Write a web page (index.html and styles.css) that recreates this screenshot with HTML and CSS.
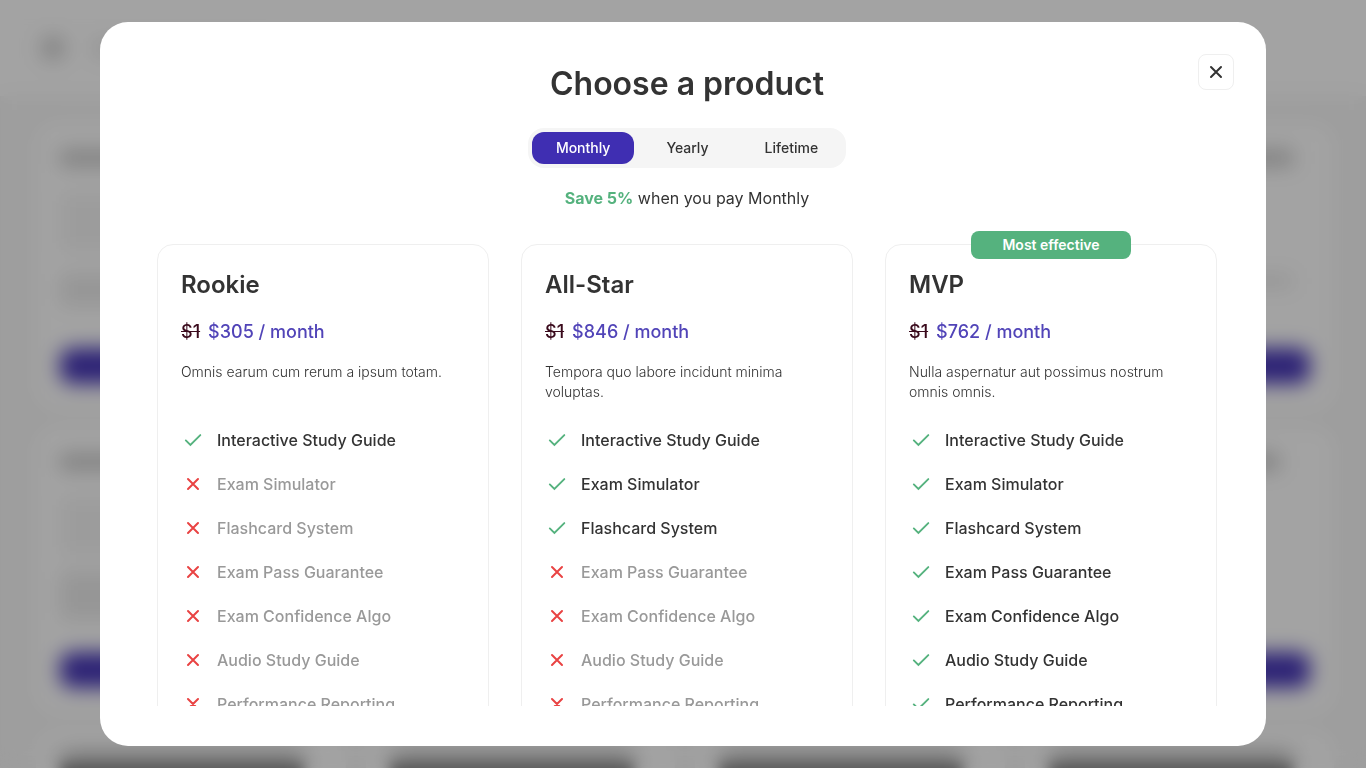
FILE: index.html
```
<!DOCTYPE html>
<html lang="en">
<head>
<meta charset="utf-8">
<title>Choose a product</title>
<link rel="stylesheet" href="styles.css">
</head>
<body>
<svg class="sprite" aria-hidden="true">
  <symbol id="check" viewBox="0 0 24 24"><path d="M4.8 12.4l4.6 4.5L19.3 7.1" fill="none" stroke="currentColor" stroke-width="1.9" stroke-linecap="round"/></symbol>
  <symbol id="cross" viewBox="0 0 24 24"><path d="M7 7l10 10M17 7L7 17" fill="none" stroke="currentColor" stroke-width="2" stroke-linecap="round"/></symbol>
</svg>

<div class="page" aria-hidden="true">
  <div class="topbar"><span class="logo"></span><span class="logo-text"></span></div>
  <div class="tiles">
    <div class="tile"><i class="bar title"></i><i class="bar para"></i><i class="bar note"></i><i class="cta"></i></div>
    <div class="tile"><i class="bar title"></i><i class="bar para"></i><i class="bar note"></i><i class="cta"></i></div>
    <div class="tile"><i class="bar title"></i><i class="bar para"></i><i class="bar note"></i><i class="cta"></i></div>
    <div class="tile"><i class="bar title wide"></i><i class="bar para clear"></i><i class="bar note thin"></i><i class="cta"></i></div>
    <div class="tile"><i class="bar title"></i><i class="bar para"></i><i class="bar note tall"></i><i class="cta"></i></div>
    <div class="tile"><i class="bar title"></i><i class="bar para"></i><i class="bar note"></i><i class="cta"></i></div>
    <div class="tile"><i class="bar title"></i><i class="bar para"></i><i class="bar note"></i><i class="cta"></i></div>
    <div class="tile"><i class="bar title"></i><i class="bar para clear"></i><i class="bar note clear"></i><i class="cta"></i></div>
    <div class="tile"><i class="bar heading"></i></div>
    <div class="tile"><i class="bar heading"></i></div>
    <div class="tile"><i class="bar heading"></i></div>
    <div class="tile"><i class="bar heading"></i></div>
  </div>
</div>

<div class="overlay">
  <main class="modal" role="dialog" aria-modal="true" aria-labelledby="modal-title">
    <button class="close" type="button" aria-label="Close"><svg class="icon"><use href="#cross"/></svg></button>
    <div class="scroll">
      <h1 class="modal-title" id="modal-title">Choose a product</h1>
      <div class="tabs">
        <button class="tab active" type="button">Monthly</button>
        <button class="tab" type="button">Yearly</button>
        <button class="tab" type="button">Lifetime</button>
      </div>
      <p class="saving"><strong>Save 5%</strong> when you pay Monthly</p>
      <div class="plans">
        <section class="plan">
          <h2 class="plan-name">Rookie</h2>
          <p class="price"><s>$1</s><span>$305 / month</span></p>
          <p class="summary">Omnis earum cum rerum a ipsum totam.</p>
          <ul class="features">
            <li><svg class="icon"><use href="#check"/></svg>Interactive Study Guide</li>
            <li class="off"><svg class="icon"><use href="#cross"/></svg>Exam Simulator</li>
            <li class="off"><svg class="icon"><use href="#cross"/></svg>Flashcard System</li>
            <li class="off"><svg class="icon"><use href="#cross"/></svg>Exam Pass Guarantee</li>
            <li class="off"><svg class="icon"><use href="#cross"/></svg>Exam Confidence Algo</li>
            <li class="off"><svg class="icon"><use href="#cross"/></svg>Audio Study Guide</li>
            <li class="off"><svg class="icon"><use href="#cross"/></svg>Performance Reporting</li>
          </ul>
        </section>
        <section class="plan">
          <h2 class="plan-name">All-Star</h2>
          <p class="price"><s>$1</s><span>$846 / month</span></p>
          <p class="summary">Tempora quo labore incidunt minima voluptas.</p>
          <ul class="features">
            <li><svg class="icon"><use href="#check"/></svg>Interactive Study Guide</li>
            <li><svg class="icon"><use href="#check"/></svg>Exam Simulator</li>
            <li><svg class="icon"><use href="#check"/></svg>Flashcard System</li>
            <li class="off"><svg class="icon"><use href="#cross"/></svg>Exam Pass Guarantee</li>
            <li class="off"><svg class="icon"><use href="#cross"/></svg>Exam Confidence Algo</li>
            <li class="off"><svg class="icon"><use href="#cross"/></svg>Audio Study Guide</li>
            <li class="off"><svg class="icon"><use href="#cross"/></svg>Performance Reporting</li>
          </ul>
        </section>
        <section class="plan">
          <span class="ribbon">Most effective</span>
          <h2 class="plan-name">MVP</h2>
          <p class="price"><s>$1</s><span>$762 / month</span></p>
          <p class="summary">Nulla aspernatur aut possimus nostrum omnis omnis.</p>
          <ul class="features">
            <li><svg class="icon"><use href="#check"/></svg>Interactive Study Guide</li>
            <li><svg class="icon"><use href="#check"/></svg>Exam Simulator</li>
            <li><svg class="icon"><use href="#check"/></svg>Flashcard System</li>
            <li><svg class="icon"><use href="#check"/></svg>Exam Pass Guarantee</li>
            <li><svg class="icon"><use href="#check"/></svg>Exam Confidence Algo</li>
            <li><svg class="icon"><use href="#check"/></svg>Audio Study Guide</li>
            <li><svg class="icon"><use href="#check"/></svg>Performance Reporting</li>
          </ul>
        </section>
      </div>
    </div>
  </main>
</div>
</body>
</html>
```
FILE: styles.css
```
* { box-sizing: border-box; }
body {
  margin: 0;
  height: 100vh;
  overflow: hidden;
  background: #f7f7f7;
  color: #333;
  font-family: Inter, "Liberation Sans", sans-serif;
  font-size: 16px;
  line-height: 24px;
}
h1, h2, p, ul { margin: 0; padding: 0; }
button { font: inherit; color: inherit; border: 0; background: none; padding: 0; cursor: pointer; }
.sprite { display: none; }
.icon { width: 24px; height: 24px; flex: none; }

/* Page behind the dialog */
.page { height: 100vh; overflow: hidden; }
.topbar {
  display: flex;
  align-items: center;
  gap: 28px;
  height: 96px;
  padding: 0 42px;
  background: #fff;
}
.logo { width: 22px; height: 22px; border-radius: 6px; background: #ccc; }
.logo-text { width: 160px; height: 20px; background: #ececec; }
.tiles {
  display: grid;
  grid-template-columns: repeat(4, 1fr);
  grid-auto-rows: 284px;
  gap: 20px;
  padding: 28px 32px 28px 36px;
}
.tile {
  display: flex;
  flex-direction: column;
  padding: 24px;
  border-radius: 20px;
  background: #fff;
}
.bar { display: block; background: #f5f5f5; }
.title { width: 230px; height: 16px; margin: 2px 0 26px; background: #c8c8c8; }
.title.wide { width: 244px; }
.para { height: 60px; margin-bottom: 22px; }
.note { height: 32px; background: #ebebeb; }
.note.tall { height: 48px; margin-top: -6px; background: #ebebeb; }
.note.thin { width: 244px; height: 14px; }
.bar.clear { background: none; }
.cta { display: block; height: 36px; margin-top: auto; border-radius: 12px; background: #4737b8; }
.heading { width: 244px; height: 40px; background: #888; filter: blur(6px); }

/* Dialog */
.overlay {
  position: fixed;
  inset: 0;
  display: flex;
  padding: 22px 100px;
  background: rgba(0, 0, 0, 0.36);
  backdrop-filter: blur(10px);
}
.modal {
  position: relative;
  flex: 1;
  display: flex;
  padding: 0 49px 40px 57px;
  border-radius: 28px;
  background: #fff;
}
.close {
  position: absolute;
  top: 32px;
  right: 32px;
  display: flex;
  align-items: center;
  justify-content: center;
  width: 36px;
  height: 36px;
  border: 1px solid #efefef;
  border-radius: 8px;
}
.scroll {
  flex: 1;
  display: flex;
  flex-direction: column;
  align-items: center;
  padding-top: 42px;
  overflow-y: auto;
  scrollbar-width: none;
}
.modal-title { margin-bottom: 24px; font-size: 32px; line-height: 40px; font-weight: 600; }
.tabs { display: flex; gap: 8px; padding: 4px; border-radius: 16px; background: #f5f5f5; }
.tab { padding: 0 24px; border-radius: 12px; font-size: 14px; line-height: 32px; font-weight: 500; }
.tab.active { background: #3f2eb2; color: #fff; }
.saving { margin: 18px 0 34px; }
.saving strong { color: #55b27e; font-weight: 700; }
.plans {
  display: grid;
  grid-template-columns: repeat(3, 1fr);
  gap: 32px;
  width: 100%;
}
.plan {
  position: relative;
  padding: 23px;
  border: 1px solid #efefef;
  border-radius: 16px;
}
.ribbon {
  position: absolute;
  top: -14px;
  left: 50%;
  width: 160px;
  transform: translateX(-50%);
  border-radius: 8px;
  background: #55b27e;
  color: #fff;
  font-size: 14px;
  line-height: 28px;
  font-weight: 600;
  text-align: center;
}
.plan-name { font-size: 24px; line-height: 34px; font-weight: 600; }
.price { display: flex; gap: 8px; margin: 15px 0; font-size: 18px; line-height: 30px; font-weight: 500; color: #5144b8; }
.price s { color: #3a0a1c; }
.summary { min-height: 40px; margin-bottom: 26px; font-size: 14px; line-height: 20px; font-weight: 300; }
.features { display: flex; flex-direction: column; gap: 20px; list-style: none; font-weight: 500; }
.features li { display: flex; gap: 12px; }
.features .icon { color: #55b27e; }
.features .off { color: #999; }
.features .off .icon { color: #e94343; }
```
